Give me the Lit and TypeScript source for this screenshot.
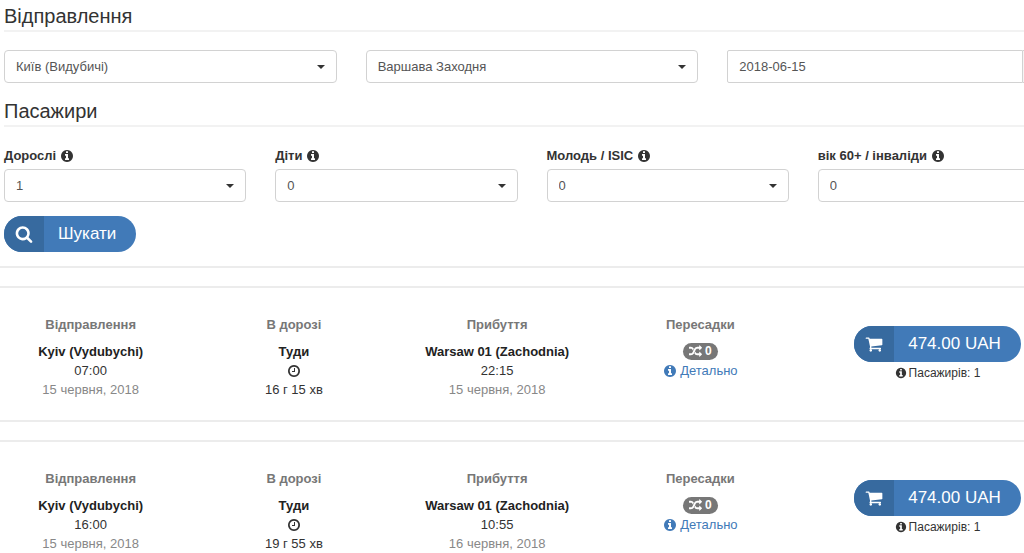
import { LitElement, html, css, svg } from "lit";
import { customElement, property, state } from "lit/decorators.js";

const ICONS: Record<string, string> = {
  info: "M1152 1376v-160q0-14-9-23t-23-9h-96v-512q0-14-9-23t-23-9h-320q-14 0-23 9t-9 23v160q0 14 9 23t23 9h96v320h-96q-14 0-23 9t-9 23v160q0 14 9 23t23 9h448q14 0 23-9t9-23zm-128-896v-160q0-14-9-23t-23-9h-192q-14 0-23 9t-9 23v160q0 14 9 23t23 9h192q14 0 23-9t9-23zm640 416q0 209-103 385.5t-279.5 279.5-385.5 103-385.5-103-279.5-279.5-103-385.5 103-385.5 279.5-279.5 385.5-103 385.5 103 279.5 279.5 103 385.5z",
  clock: "M1024 544v448q0 14-9 23t-23 9h-320q-14 0-23-9t-9-23v-64q0-14 9-23t23-9h224v-352q0-14 9-23t23-9h64q14 0 23 9t9 23zm416 352q0-148-73-273t-198-198-273-73-273 73-198 198-73 273 73 273 198 198 273 73 273-73 198-198 73-273zm224 0q0 209-103 385.5t-279.5 279.5-385.5 103-385.5-103-279.5-279.5-103-385.5 103-385.5 279.5-279.5 385.5-103 385.5 103 279.5 279.5 103 385.5z",
  search: "M1216 832q0-185-131.5-316.5t-316.5-131.5-316.5 131.5-131.5 316.5 131.5 316.5 316.5 131.5 316.5-131.5 131.5-316.5zm512 832q0 52-38 90t-90 38q-54 0-90-38l-343-342q-179 124-399 124-143 0-273.5-55.5t-225-150-150-225-55.5-273.5 55.5-273.5 150-225 225-150 273.5-55.5 273.5 55.5 225 150 150 225 55.5 273.5q0 220-124 399l343 343q37 37 37 90z",
  cart: "M704 1536q0 52-38 90t-90 38-90-38-38-90 38-90 90-38 90 38 38 90zm896 0q0 52-38 90t-90 38-90-38-38-90 38-90 90-38 90 38 38 90zm128-1088v512q0 24-16.5 42.5t-40.5 21.5l-1044 122q13 60 13 70 0 16-24 64h920q26 0 45 19t19 45-19 45-45 19h-1024q-26 0-45-19t-19-45q0-11 8-31.5t16-36 21.5-40 15.5-29.5l-177-823h-204q-26 0-45-19t-19-45 19-45 45-19h256q16 0 28.5 6.5t19.5 15.5 13 24.5 8 26 5.5 29.5 4.5 26h1201q26 0 45 19t19 45z",
  random: "M666 481q-60 92-137 273-22-45-37-72.5t-40.5-63.5-51-56.5-63-35-81.5-14.5h-224q-14 0-23-9t-9-23v-192q0-14 9-23t23-9h224q250 0 410 225zm1126 799q0 14-9 23l-320 320q-9 9-23 9-13 0-22.5-9.5t-9.5-22.5v-192q-32 0-85 .5t-81 1-73-1-71-5-64-10.5-63-18.5-58-28.5-59-40-55-53.5-56-69.5q59-93 136-273 22 45 37 72.5t40.5 63.5 51 56.5 63 35 81.5 14.5h256v-192q0-14 9-23t23-9q12 0 24 10l319 319q9 9 9 23zm0-896q0 14-9 23l-320 320q-9 9-23 9-13 0-22.5-9.5t-9.5-22.5v-192h-256q-48 0-87 15t-69 45-51 61.5-45 77.5q-32 62-78 171-29 66-49.5 111t-54 105-64 100-74 83-90 68.5-106.5 42-128 16.5h-224q-14 0-23-9t-9-23v-192q0-14 9-23t23-9h224q48 0 87-15t69-45 51-61.5 45-77.5q32-62 78-171 29-66 49.5-111t54-105 64-100 74-83 90-68.5 106.5-42 128-16.5h256v-192q0-14 9-23t23-9q12 0 24 10l319 319q9 9 9 23z",
};

@customElement("ui-icon")
class UiIcon extends LitElement {
  static styles = css`
    :host { display: inline-flex; width: 14px; height: 14px; flex: none; }
    .glyph { width: 100%; height: 100%; fill: currentColor; display: block; }
  `;
  @property() name = "info";
  render() {
    return html`<svg class="glyph" viewBox="0 0 1792 1792" aria-hidden="true">${svg`<path d=${ICONS[this.name]}></path>`}</svg>`;
  }
}

interface Trip {
  from: string;
  departTime: string;
  departDate: string;
  duration: string;
  to: string;
  arriveTime: string;
  arriveDate: string;
  changes: number;
  price: string;
  passengers: number;
}

const pill = css`
  .pill {
    display: inline-flex; align-items: center; height: 36px; padding: 0; border: 0;
    border-radius: 18px; overflow: hidden; background: #417ab8; color: #fff;
    font-family: inherit; font-size: 17px; line-height: 24px; cursor: pointer;
  }
  .pill-icon {
    display: flex; align-items: center; justify-content: center;
    width: 40px; height: 36px; background: #376a9f;
  }
  .pill-icon ui-icon { width: 18px; height: 18px; }
  .pill-text { padding: 0 20px 0 14px; white-space: nowrap; }
`;

@customElement("trip-card")
class TripCard extends LitElement {
  static styles = [pill, css`
    :host { display: block; border: solid #ececec; border-width: 2px 0; padding: 27px 0 21px; }
    .columns {
      display: grid; grid-template-columns: repeat(4, 3fr) 4fr;
      margin: 0 -49px 0 -11px; text-align: center;
    }
    .col { display: flex; flex-direction: column; align-items: center; }
    .title { margin: 0 0 8px; font-size: 13px; line-height: 19px; font-weight: 700; color: #777; }
    .line { display: flex; align-items: center; justify-content: center; height: 19px; }
    .strong { font-weight: 700; color: #222; }
    .muted { color: #888; }
    .badge {
      display: inline-flex; align-items: center; gap: 3px; height: 17px; padding: 0 6px;
      border-radius: 9px; background: #777; color: #fff; font-size: 12px; font-weight: 700;
    }
    .badge ui-icon { width: 13px; height: 13px; }
    .details { display: inline-flex; align-items: center; gap: 3px; color: #417ab8; text-decoration: none; }
    .buy { padding-top: 11px; }
    .note { display: flex; align-items: center; gap: 2px; padding-top: 2px; font-size: 12px; line-height: 18px; }
    .note ui-icon { width: 12px; height: 12px; }
  `];
  @property({ attribute: false }) trip!: Trip;
  render() {
    const t = this.trip;
    return html`<article class="columns">
      <div class="col">
        <h3 class="title">Відправлення</h3>
        <span class="line strong">${t.from}</span>
        <span class="line">${t.departTime}</span>
        <span class="line muted">${t.departDate}</span>
      </div>
      <div class="col">
        <h3 class="title">В дорозі</h3>
        <span class="line strong">Туди</span>
        <span class="line"><ui-icon name="clock"></ui-icon></span>
        <span class="line">${t.duration}</span>
      </div>
      <div class="col">
        <h3 class="title">Прибуття</h3>
        <span class="line strong">${t.to}</span>
        <span class="line">${t.arriveTime}</span>
        <span class="line muted">${t.arriveDate}</span>
      </div>
      <div class="col">
        <h3 class="title">Пересадки</h3>
        <span class="line"><span class="badge"><ui-icon name="random"></ui-icon>${t.changes}</span></span>
        <span class="line"><a class="details" href="#"><ui-icon name="info"></ui-icon>Детально</a></span>
      </div>
      <div class="col buy">
        <button class="pill" type="button">
          <span class="pill-icon"><ui-icon name="cart"></ui-icon></span>
          <span class="pill-text">${t.price}</span>
        </button>
        <span class="note"><ui-icon name="info"></ui-icon>Пасажирів: ${t.passengers}</span>
      </div>
    </article>`;
  }
}

@customElement("app-root")
class AppRoot extends LitElement {
  static styles = [pill, css`
    :host {
      display: block; overflow: hidden; background: #fff; color: #333;
      font-family: "Liberation Sans", Arial, sans-serif; font-size: 13px; line-height: 19px;
    }
    .search { margin: 0 -36px 0 4px; padding-top: 3px; }
    .heading {
      margin: 0; border-bottom: 2px solid #f2f2f2;
      font-size: 20px; line-height: 27px; font-weight: 400;
    }
    .route {
      display: grid; grid-template-columns: repeat(3, 1fr); gap: 29px;
      padding: 18px 0 15px;
    }
    .people {
      display: grid; grid-template-columns: repeat(4, 1fr); gap: 29px;
      padding: 19px 0 14px;
    }
    .label { display: flex; align-items: center; gap: 4px; padding-bottom: 4px; font-weight: 700; }
    .control {
      display: block; box-sizing: border-box; width: 100%; height: 33px; margin: 0;
      padding: 0 11px; border: 1px solid #d2d2d2; border-radius: 4px; background: #fff;
      appearance: none; color: #555; font-family: inherit; font-size: 13px; outline: none;
    }
    .select { position: relative; }
    .select::after {
      content: ""; position: absolute; right: 12px; top: 15px; pointer-events: none;
      border: 4px solid transparent; border-top-color: #333; border-bottom: 0;
    }
    .date { display: flex; }
    .date .control { flex: 1; width: auto; min-width: 0; border-radius: 2px 0 0 2px; }
    .calendar {
      width: 37px; height: 33px; padding: 0; border: 1px solid #d2d2d2; border-left: 0;
      border-radius: 0 4px 4px 0; background: #f5f5f5;
    }
    .results { display: grid; gap: 18px; padding-top: 14px; }
    .results-top { width: 100%; height: 2px; margin: 0; border: 0; background: #ececec; }
  `];

  @state() private trips: Trip[] = [
    {
      from: "Kyiv (Vydubychi)", departTime: "07:00", departDate: "15 червня, 2018", duration: "16 г 15 хв",
      to: "Warsaw 01 (Zachodnia)", arriveTime: "22:15", arriveDate: "15 червня, 2018",
      changes: 0, price: "474.00 UAH", passengers: 1,
    },
    {
      from: "Kyiv (Vydubychi)", departTime: "16:00", departDate: "15 червня, 2018", duration: "19 г 55 хв",
      to: "Warsaw 01 (Zachodnia)", arriveTime: "10:55", arriveDate: "16 червня, 2018",
      changes: 0, price: "474.00 UAH", passengers: 1,
    },
  ];

  private people = [
    { id: "adults", label: "Дорослі", value: 1 },
    { id: "children", label: "Діти", value: 0 },
    { id: "youth", label: "Молодь / ISIC", value: 0 },
    { id: "seniors", label: "вік 60+ / інваліди", value: 0 },
  ];

  render() {
    return html`
      <form class="search">
        <h2 class="heading">Відправлення</h2>
        <div class="route">
          <div class="select"><select class="control" aria-label="Звідки"><option>Київ (Видубичі)</option></select></div>
          <div class="select"><select class="control" aria-label="Куди"><option>Варшава Заходня</option></select></div>
          <div class="date">
            <input class="control" type="text" aria-label="Дата" .value=${"2018-06-15"} />
            <button class="calendar" type="button" aria-label="Календар"></button>
          </div>
        </div>
        <h2 class="heading">Пасажири</h2>
        <div class="people">
          ${this.people.map((p) => html`<div>
            <label class="label" for=${p.id}>${p.label} <ui-icon name="info"></ui-icon></label>
            <div class="select"><select class="control" id=${p.id}><option>${p.value}</option></select></div>
          </div>`)}
        </div>
        <button class="pill" type="button">
          <span class="pill-icon"><ui-icon name="search"></ui-icon></span>
          <span class="pill-text">Шукати</span>
        </button>
      </form>
      <section class="results">
        <hr class="results-top" />
        ${this.trips.map((t) => html`<trip-card .trip=${t}></trip-card>`)}
      </section>
    `;
  }
}
